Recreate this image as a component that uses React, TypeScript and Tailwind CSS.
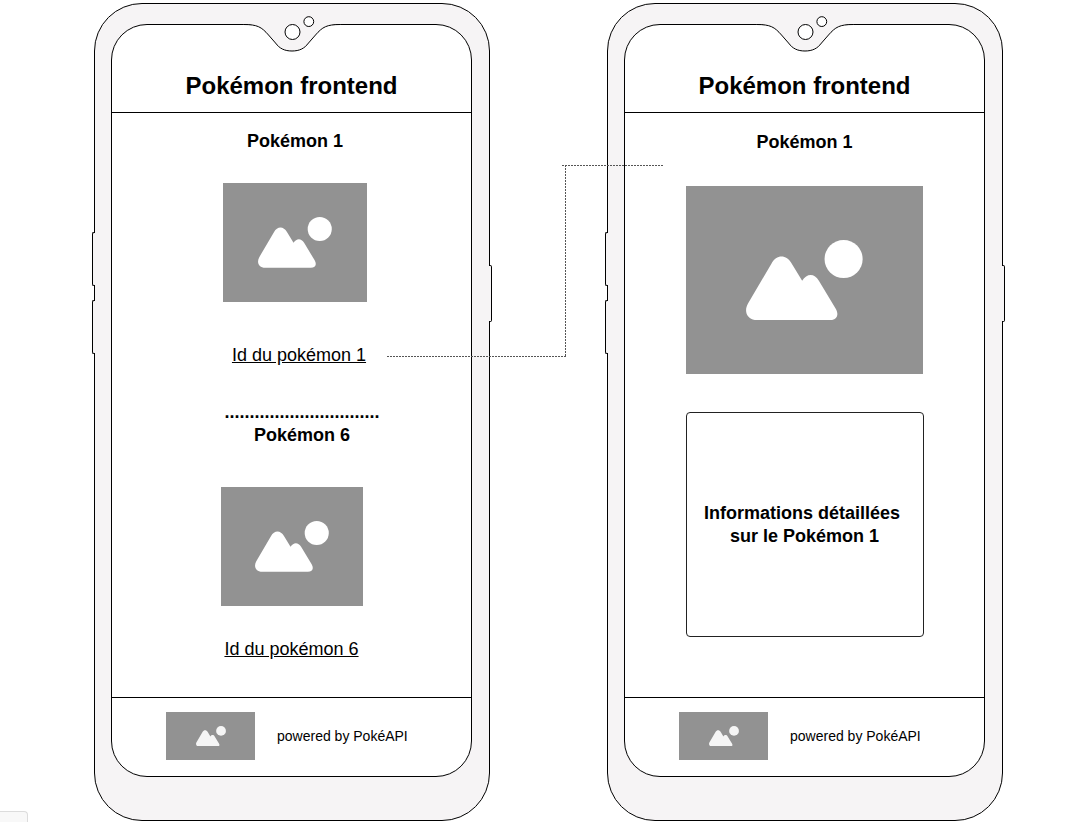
import type { ReactNode } from "react";

function Placeholder({ size, icon, label }: { size: string; icon: string; label: string }) {
  return (
    <div role="img" aria-label={label} className={`flex shrink-0 items-center justify-center bg-[#929292] ${size}`}>
      <svg viewBox="0 0 350 240" className={icon} fill="currentColor" aria-hidden="true">
        <path d="M34 240 C4 240 -8 214 6 190 L76 71 C91 42 121 42 137 71 L168 122 C182 99 205 99 218 122 L268 205 C280 226 271 240 250 240 Z" />
        <circle cx="292" cy="57" r="57" />
      </svg>
    </div>
  );
}

function Notch() {
  return (
    <svg
      viewBox="0 0 101 38"
      className="absolute -top-2.5 left-1/2 h-[38px] w-[101px] -translate-x-1/2"
      aria-hidden="true"
    >
      <path d="M2 8 V9.5 C16 9.5 20 12 27 20 L34 28 C38 33.500 43 36 50.5 36 C58 36 63 33.500 67 28 L74 20 C81 12 85 9.5 99 9.5 V8 Z" fill="#f6f4f5" />
      <path d="M2 9.5 C16 9.5 20 12 27 20 L34 28 C38 33.500 43 36 50.5 36 C58 36 63 33.500 67 28 L74 20 C81 12 85 9.5 99 9.5" fill="none" stroke="#000" />
      <circle cx="51" cy="17" r="7.5" fill="#fff" stroke="#000" />
      <circle cx="67.3" cy="6.6" r="4.9" fill="#fff" stroke="#000" />
    </svg>
  );
}

function Phone({ children }: { children: ReactNode }) {
  return (
    <section className="relative w-[396px] shrink-0 rounded-[48px] border border-black bg-[#f6f4f5] pt-5 pr-[17px] pb-[43px] pl-4">
      <span className="absolute top-[228px] -left-[3px] h-[54px] w-[3px] rounded-l-xs border border-r-0 border-black bg-[#f6f4f5]" />
      <span className="absolute top-[296px] -left-[3px] h-[54px] w-[3px] rounded-l-xs border border-r-0 border-black bg-[#f6f4f5]" />
      <span className="absolute top-[261px] -right-[3px] h-[57px] w-[3px] rounded-r-xs border border-l-0 border-black bg-[#f6f4f5]" />
      <div className="relative rounded-[36px] border border-black bg-white">
        <Notch />
        <header className="border-b border-black pt-[45px] pb-[10px] text-center">
          <h1 className="text-2xl leading-8 font-bold">Pokémon frontend</h1>
        </header>
        {children}
        <footer className="flex h-[79px] items-center border-t border-black pb-0.5 pl-[54px]">
          <Placeholder size="h-12 w-[89px]" icon="w-[30px] text-[#f5f5f5]" label="Logo PokéAPI" />
          <p className="pl-[22px] text-sm">powered by PokéAPI</p>
        </footer>
      </div>
    </section>
  );
}

function Connector() {
  return (
    <svg
      viewBox="0 0 278 194"
      className="pointer-events-none absolute top-[162px] left-[292px] h-[194px] w-[278px]"
      fill="none"
      stroke="#555"
      strokeDasharray="2 1"
      aria-hidden="true"
    >
      <path d="M1 191.5 H180" />
      <path d="M179.5 191 V1" />
      <path d="M176 0.5 H277" />
    </svg>
  );
}

export default function App() {
  return (
    <div className="relative flex min-h-screen items-start justify-center bg-white pt-[3px] pl-[9px] font-['Liberation_Sans',Arial,sans-serif] text-black">
      <main className="relative flex gap-[117px]">
        <Phone>
          <div className="flex flex-col items-center pt-[17px] pb-9 text-lg leading-[23px]">
            <div className="flex flex-col items-center pl-[7px]">
              <h2 className="font-bold">Pokémon 1</h2>
              <div className="pt-[30px] pb-[42px]">
                <Placeholder size="h-[119px] w-36" icon="w-[74px] text-white" label="Image du Pokémon 1" />
              </div>
              <a href="#pokemon-1" className="ml-2 underline">Id du pokémon 1</a>
            </div>
            <div className="pt-[34px] pl-[21px] text-center font-bold">
              <p>...............................</p>
              <h2>Pokémon 6</h2>
            </div>
            <div className="pt-10 pb-8">
              <Placeholder size="h-[119px] w-[142px]" icon="w-[74px] text-white" label="Image du Pokémon 6" />
            </div>
            <a href="#pokemon-6" className="underline">Id du pokémon 6</a>
          </div>
        </Phone>
        <Phone>
          <div id="pokemon-1" className="flex flex-col items-center pt-[18px] pb-[60px] text-lg leading-[23px]">
            <h2 className="font-bold">Pokémon 1</h2>
            <div className="pt-8 pb-[38px]">
              <Placeholder size="h-[188px] w-[237px]" icon="w-[117px] text-white" label="Image du Pokémon 1" />
            </div>
            <div className="flex h-[225px] w-[238px] items-center justify-center rounded-sm border border-[#222] text-center font-bold">
              <p>
                Informations détaillées&nbsp;
                <br />
                sur le Pokémon 1
              </p>
            </div>
          </div>
        </Phone>
        <Connector />
      </main>
      <div className="absolute bottom-0 left-0 h-[11px] w-7 rounded-tr-sm border-t border-r border-[#dcdcdc] bg-[#f8f8f8]" />
    </div>
  );
}
